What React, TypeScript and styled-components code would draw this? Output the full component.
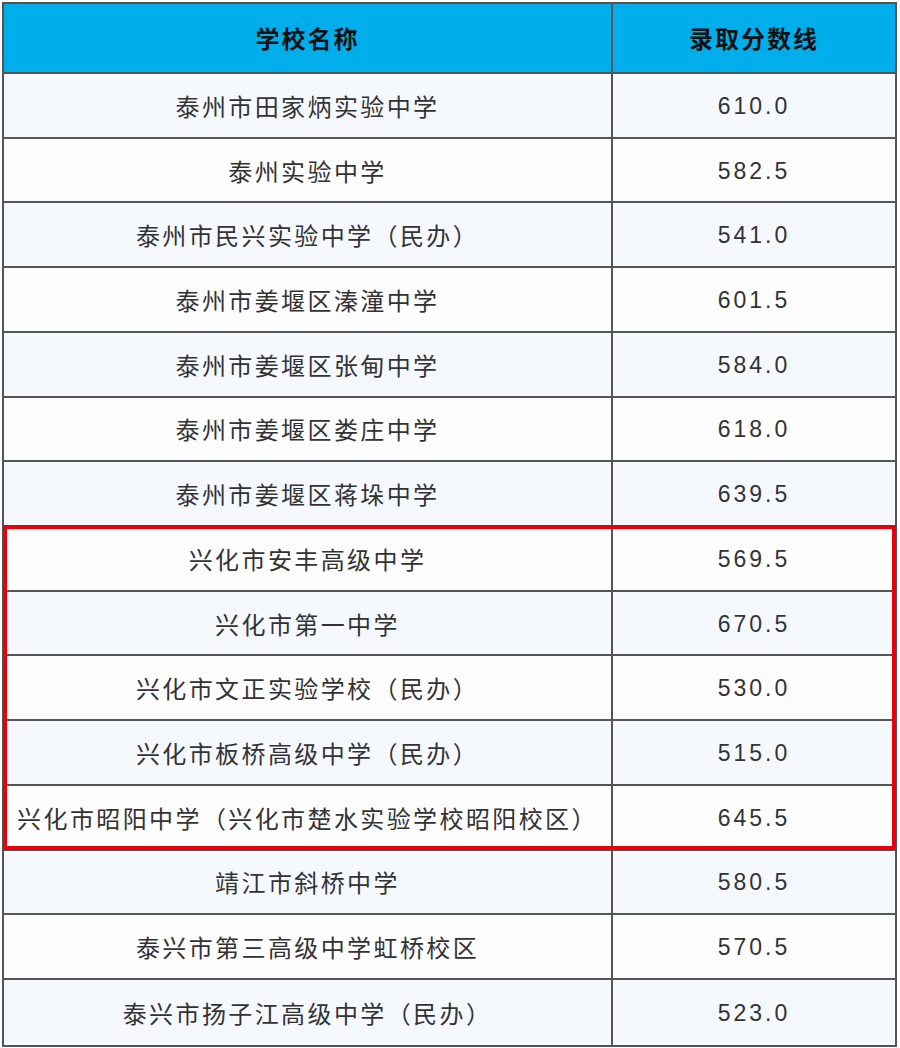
import React from "react";
import styled, { createGlobalStyle } from "styled-components";

const GlobalStyle = createGlobalStyle`
  html, body { margin: 0; padding: 0; background: #ffffff; }
  body { font-family: "Noto Sans CJK SC", "Noto Sans", sans-serif; }
`;

const Table = styled.div`
  box-sizing: border-box;
  margin: 2px 0 0 2px;
  width: 895px;
  border: 2px solid #555;
  display: flex;
  flex-direction: column;
  font-family: "Noto Sans CJK SC", "Noto Sans", sans-serif;
`;

const Row = styled.div<{ $variant: "head" | "odd" | "even"; $last?: boolean }>`
  box-sizing: border-box;
  display: grid;
  grid-template-columns: 609px 1fr;
  height: ${(p) => (p.$variant === "head" ? "70px" : "64.73px")};
  border-bottom: ${(p) => (p.$last ? "none" : "2px solid #555")};
  background: ${(p) =>
    p.$variant === "head" ? "#00AEEC" : p.$variant === "odd" ? "#F5F9FE" : "#FDFDFE"};
`;

const Cell = styled.div<{ $head?: boolean; $divider?: boolean; $num?: boolean }>`
  display: flex;
  align-items: center;
  justify-content: center;
  padding-top: ${(p) => (p.$num ? "2px" : "0")};
  padding-bottom: ${(p) => (p.$head ? "2px" : "0")};
  border-right: ${(p) => (p.$divider ? "2px solid #555" : "none")};
  font-family: ${(p) =>
    p.$num ? '"Liberation Sans", Arial, sans-serif' : '"Noto Sans CJK SC", "Noto Sans", sans-serif'};
  font-size: ${(p) => (p.$num ? "23px" : "24px")};
  letter-spacing: ${(p) => (p.$head ? "2px" : p.$num ? "3px" : "2.4px")};
  font-weight: ${(p) => (p.$head ? 700 : 400)};
  color: ${(p) => (p.$head ? "#111" : "#333")};
  white-space: nowrap;
`;

const Highlight = styled.div`
  position: relative;
  display: flex;
  flex-direction: column;
`;

const RedFrame = styled.div`
  position: absolute;
  top: -2px;
  bottom: 1px;
  left: -1px;
  right: -1px;
  border: 4px solid #E8000B;
  pointer-events: none;
`;

type Item = { name: string; score: string };

const rows: Item[] = [
  { name: "泰州市田家炳实验中学", score: "610.0" },
  { name: "泰州实验中学", score: "582.5" },
  { name: "泰州市民兴实验中学（民办）", score: "541.0" },
  { name: "泰州市姜堰区溱潼中学", score: "601.5" },
  { name: "泰州市姜堰区张甸中学", score: "584.0" },
  { name: "泰州市姜堰区娄庄中学", score: "618.0" },
  { name: "泰州市姜堰区蒋垛中学", score: "639.5" },
  { name: "兴化市安丰高级中学", score: "569.5" },
  { name: "兴化市第一中学", score: "670.5" },
  { name: "兴化市文正实验学校（民办）", score: "530.0" },
  { name: "兴化市板桥高级中学（民办）", score: "515.0" },
  { name: "兴化市昭阳中学（兴化市楚水实验学校昭阳校区）", score: "645.5" },
  { name: "靖江市斜桥中学", score: "580.5" },
  { name: "泰兴市第三高级中学虹桥校区", score: "570.5" },
  { name: "泰兴市扬子江高级中学（民办）", score: "523.0" },
];

const renderRow = (r: Item, i: number) => (
  <Row key={i} $variant={i % 2 === 0 ? "odd" : "even"} $last={i === rows.length - 1}>
    <Cell $divider>{r.name}</Cell>
    <Cell $num>{r.score}</Cell>
  </Row>
);

export default function App() {
  return (
    <>
      <GlobalStyle />
      <Table>
        <Row $variant="head">
          <Cell $head $divider>学校名称</Cell>
          <Cell $head>录取分数线</Cell>
        </Row>
        {rows.slice(0, 7).map((r, i) => renderRow(r, i))}
        <Highlight>
          {rows.slice(7, 12).map((r, i) => renderRow(r, i + 7))}
          <RedFrame />
        </Highlight>
        {rows.slice(12).map((r, i) => renderRow(r, i + 12))}
      </Table>
    </>
  );
}
